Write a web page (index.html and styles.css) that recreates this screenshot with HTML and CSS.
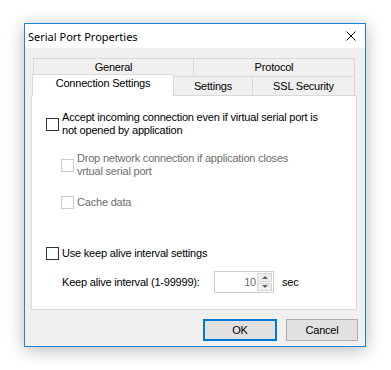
FILE: index.html
```html
<!DOCTYPE html>
<html lang="en">
<head>
    <meta charset="UTF-8">
    <title>Serial Port Properties</title>
    <link rel="stylesheet" href="styles.css">
</head>
<body>
    <div class="window">
        <div class="titlebar">
            <span class="title">Serial Port Properties</span>
            <svg class="close" width="10" height="10" viewBox="0 0 10 10">
                <path d="M0.5 0.5 L9.5 9.5 M9.5 0.5 L0.5 9.5" stroke="#000" stroke-width="1" fill="none"/>
            </svg>
        </div>
        <div class="content">
            <div class="tabs">
                <div class="row row-back">
                    <div class="tab tab-general">General</div>
                    <div class="tab tab-protocol">Protocol</div>
                </div>
                <div class="row row-front">
                    <div class="tab tab-active">Connection Settings</div>
                    <div class="tab tab-settings">Settings</div>
                    <div class="tab tab-ssl">SSL Security</div>
                </div>
            </div>
            <div class="panel">
                <label class="check check-accept">
                    <span class="box"></span>
                    <span class="text">Accept incoming connection even if virtual serial port is<br>not opened by application</span>
                </label>
                <label class="check disabled check-drop">
                    <span class="box"></span>
                    <span class="text">Drop network connection if application closes<br>vrtual serial port</span>
                </label>
                <label class="check disabled check-cache">
                    <span class="box"></span>
                    <span class="text">Cache data</span>
                </label>
                <label class="check check-keep">
                    <span class="box"></span>
                    <span class="text">Use keep alive interval settings</span>
                </label>
                <div class="interval">
                    <span class="interval-label">Keep alive interval (1-99999):</span>
                    <div class="spin">
                        <span class="spin-value">10</span>
                        <div class="spin-buttons">
                            <span class="spin-btn"><span class="arrow-up"></span></span>
                            <span class="spin-btn"><span class="arrow-down"></span></span>
                        </div>
                    </div>
                    <span class="unit">sec</span>
                </div>
            </div>
            <div class="buttons">
                <button class="btn btn-default">OK</button>
                <button class="btn">Cancel</button>
            </div>
        </div>
    </div>
</body>
</html>
```
FILE: styles.css
```css
* {
    box-sizing: border-box;
    margin: 0;
    padding: 0;
}

body {
    width: 391px;
    height: 370px;
    background: #fff;
    font-family: 'Liberation Sans', Arial, sans-serif;
    font-size: 11px;
    letter-spacing: -0.2px;
    color: #000;
    overflow: hidden;
}

.window {
    margin: 23px 0 0 24px;
    width: 342px;
    height: 324px;
    border: 1px solid #1883d7;
    background: #f0f0f0;
    box-shadow: 0 3px 16px rgba(0, 0, 0, 0.28);
    display: flex;
    flex-direction: column;
}

.titlebar {
    height: 24px;
    background: #fff;
    display: flex;
    align-items: center;
    justify-content: space-between;
    padding: 0 9px 0 3px;
}

.title {
    font-family: 'Noto Sans', sans-serif;
    font-size: 11px;
    letter-spacing: 0;
}

.content {
    flex: 1;
    padding: 10px 7px 0 6px;
    display: flex;
    flex-direction: column;
}

/* tabs */
.row {
    display: flex;
    align-items: flex-end;
}

.row-back {
    margin-left: 2px;
}

.row-front {
    margin-left: 1px;
}

.tab {
    height: 18px;
    border: 1px solid #d9d9d9;
    border-bottom: none;
    background: #f0f0f0;
    text-align: center;
    line-height: 17px;
}

.tab + .tab {
    margin-left: -1px;
}

.tab-general { width: 161px; }
.tab-protocol { width: 162px; }
.tab-settings { width: 80px; height: 19px; line-height: 18px; }
.tab-ssl { width: 103px; height: 19px; line-height: 18px; }

.tab-active {
    width: 142px;
    height: 22px;
    margin-top: -2px;
    margin-bottom: -1px;
    background: #fff;
    position: relative;
    z-index: 1;
    line-height: 17px;
}

/* panel */
.panel {
    width: 326px;
    height: 215px;
    background: #fff;
    border: 1px solid #d9d9d9;
    padding: 15px 0 0 14px;
}

.check {
    display: flex;
    align-items: center;
    line-height: 13px;
}

.box {
    width: 13px;
    height: 13px;
    border: 1px solid #333;
    background: #fff;
    flex: none;
    margin-right: 3px;
}

.check.disabled {
    color: #6d6d6d;
    margin-left: 15px;
}

.check.disabled .box {
    border-color: #cccccc;
}

.check-drop { margin-top: 15px; }
.check-cache { margin-top: 18px; }
.check-keep { margin-top: 38px; }

.interval {
    display: flex;
    align-items: center;
    margin: 11px 0 0 16px;
}

.interval-label {
    width: 152px;
}

.spin {
    width: 60px;
    height: 22px;
    border: 1px solid #cccccc;
    display: flex;
    background: #fff;
}

.spin-value {
    flex: 1;
    text-align: right;
    line-height: 20px;
    color: #6d6d6d;
    padding-right: 1px;
}

.spin-buttons {
    width: 16px;
    display: flex;
    flex-direction: column;
    padding: 1px 1px 1px 0;
    gap: 1px;
}

.spin-btn {
    flex: 1;
    background: #efefef;
    border: 1px solid #d4d4d4;
    display: flex;
    align-items: center;
    justify-content: center;
}

.arrow-up {
    border-left: 3px solid transparent;
    border-right: 3px solid transparent;
    border-bottom: 3px solid #606060;
}

.arrow-down {
    border-left: 3px solid transparent;
    border-right: 3px solid transparent;
    border-top: 3px solid #606060;
}

.unit {
    margin-left: 8px;
}

/* buttons */
.buttons {
    display: flex;
    justify-content: flex-end;
    gap: 9px;
    margin-top: 9px;
}

.btn {
    width: 72px;
    height: 22px;
    border: 1px solid #adadad;
    background: #e1e1e1;
    font-family: 'Liberation Sans', Arial, sans-serif;
    font-size: 11px;
    letter-spacing: -0.2px;
    color: #000;
}

.btn-default {
    width: 74px;
    border: 2px solid #0078d7;
}
```
